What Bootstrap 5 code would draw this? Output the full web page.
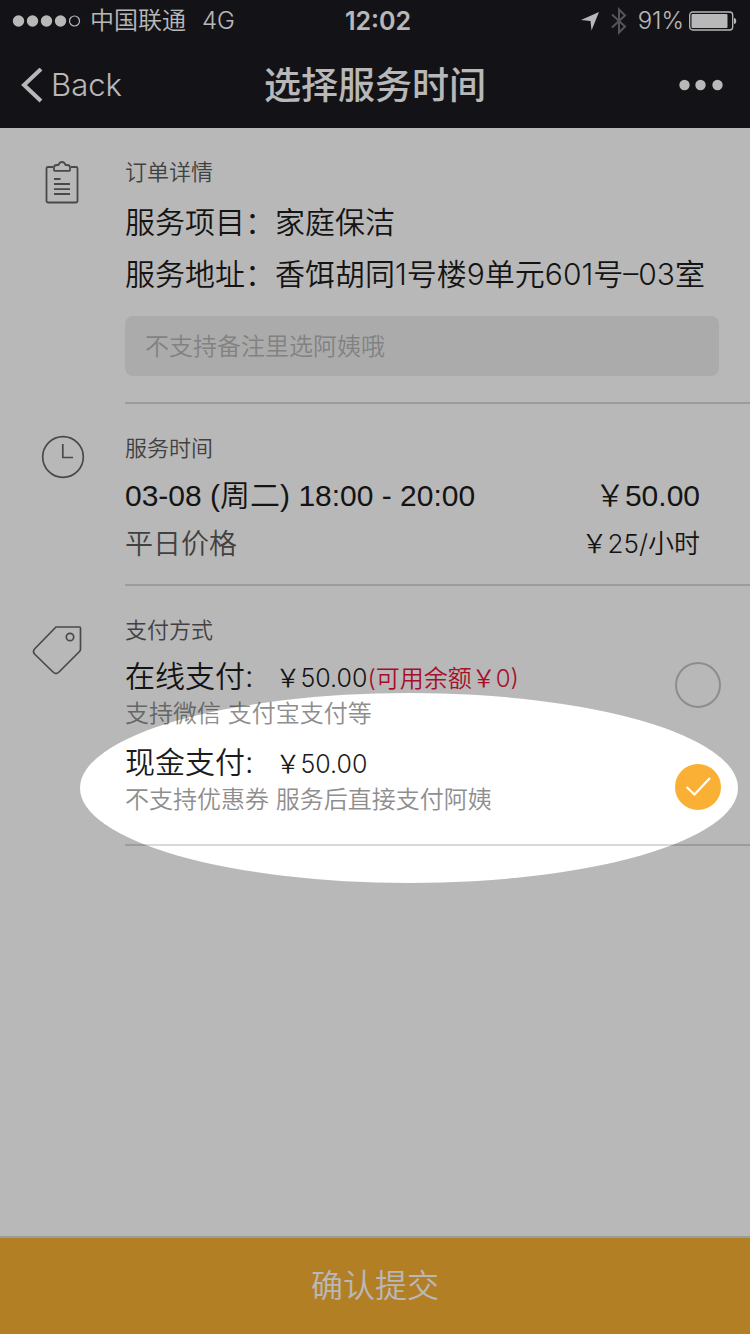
<!DOCTYPE html>
<html lang="zh-CN">
<head>
<meta charset="utf-8">
<meta name="viewport" content="width=device-width, initial-scale=1">
<title>选择服务时间</title>
<link href="https://cdn.jsdelivr.net/npm/bootstrap@5.3.0/dist/css/bootstrap.min.css" rel="stylesheet">
<style>
  body { font-family: Inter, "Noto Sans CJK SC", sans-serif; font-weight: 350; color: #1c1c1c; background: #fff; }
  .helv { font-family: "Liberation Sans", "Noto Sans CJK SC", sans-serif; }
  .topbar { background: #1b1a20; color: #fff; }
  .status { height: 40px; font-size: 24px; line-height: 40px; padding: 2px 12px 0; }
  .status-side { flex: 1 1 0; }
  .clock-text { font-size: 25px; font-weight: 600; padding-left: 6px; }
  .titlebar { height: 88px; padding: 4px 26px 0 20px; }
  .back { font-size: 31px; font-weight: 300; color: #fff; gap: 7px; text-decoration: none; }
  .page-title { font-size: 37px; font-weight: 500; line-height: 48px; margin: 0; padding-left: 6px; }
  .icon-col { width: 125px; flex: none; }
  .block-body { border-bottom: 2px solid #d9d9d9; padding-top: 28px; }
  .block-head { font-size: 22px; line-height: 32px; font-weight: 350; color: #5a5a5a; margin: 0 0 8px; }
  .line-lg { font-size: 30px; line-height: 52px; }
  .line-md { font-size: 30px; line-height: 48px; padding-right: 50px; }
  .plain-label { font-size: 28px; color: #5a5a5a; }
  .hour-price { font-size: 26px; }
  .note-wrap { padding: 16px 31px 26px 0; }
  .note { height: 60px; font: inherit; font-size: 24px; background: #eee; border: 0; border-radius: 8px; padding: 0 20px; }
  .note::placeholder { color: #b4b4b4; opacity: 1; }
  .pay-list { gap: 10px; padding-bottom: 28px; }
  .pay-name { font-size: 30px; line-height: 44px; height: 44px; }
  .pay-price { font-size: 25px; line-height: 32px; margin-left: 22px; }
  .pay-extra { font-size: 24px; line-height: 32px; color: #e8143a; }
  .pay-desc { font-size: 24px; line-height: 32px; color: #8e8e8e; }
  .pay-radio.form-check-input { width: 46px; height: 46px; margin: 0 29px 0 0; border: 2px solid #c4c4c4; flex: none; }
  .pay-radio.form-check-input:checked { border-color: #f9b034; background-color: #f9b034; background-size: 46px 46px;
    background-image: url("data:image/svg+xml,%3Csvg xmlns='http://www.w3.org/2000/svg' viewBox='0 0 46 46'%3E%3Cpath d='M11.500 23l8 7.500L35 14' fill='none' stroke='%23fff' stroke-width='2.200'/%3E%3C/svg%3E"); background-position: center; }
  .spotlight { left: 80px; right: 12px; top: 107px; height: 190px; border-radius: 50%; box-shadow: 0 0 0 2000px rgba(0,0,0,.28); pointer-events: none; }
  .submit { height: 98px; font-size: 32px; font-weight: 350; color: #fff; background: #f9b034; border: 0; border-top: 2px solid #d9d9d9; }
</style>
</head>
<body>
<div class="d-flex flex-column min-vh-100 overflow-hidden">
  <header class="topbar">
    <div class="status d-flex align-items-center">
      <div class="status-side d-flex align-items-center">
        <svg width="70" height="14" viewBox="0 0 70 14" fill="#fff" aria-hidden="true"><circle cx="6.500" cy="7" r="5.700"/><circle cx="20.500" cy="7" r="5.700"/><circle cx="34.500" cy="7" r="5.700"/><circle cx="48.500" cy="7" r="5.700"/><circle cx="62.500" cy="7" r="5" fill="none" stroke="#fff" stroke-width="1.200"/></svg>
        <span class="ms-2">中国联通</span><span class="ms-3">4G</span>
      </div>
      <div class="clock-text">12:02</div>
      <div class="status-side d-flex align-items-center justify-content-end">
        <svg width="20" height="20" viewBox="0 0 20 20" aria-hidden="true"><path d="M19 1L11.500 19.500 10.500 10 1 9z" fill="#fff"/></svg>
        <svg class="ms-2" width="22" height="28" viewBox="0 0 22 28" fill="none" stroke="#77767b" stroke-width="2" aria-hidden="true"><path d="M4 7.500L17 19.500 11 25.500V2.500L17 8.500 4 20.500"/></svg>
        <span class="ms-2">91%</span>
        <svg class="ms-1" width="50" height="20" viewBox="0 0 50 20" aria-hidden="true"><rect x="1.700" y="1" width="43" height="18" rx="3" fill="none" stroke="#fff" stroke-width="1.300"/><rect x="3.500" y="3" width="36" height="14" rx="1" fill="#fff"/><path d="M46 7c3 0 3 6 0 6z" fill="#fff"/></svg>
      </div>
    </div>
    <nav class="titlebar d-flex align-items-center" aria-label="导航">
      <div class="status-side"><a class="back d-inline-flex align-items-center" href="#"><svg width="24" height="36" viewBox="0 0 24 36" fill="none" stroke="#fff" stroke-width="4" aria-hidden="true"><path d="M21 1L4 17l17 16"/></svg>Back</a></div>
      <h1 class="page-title">选择服务时间</h1>
      <div class="status-side d-flex justify-content-end"><button class="btn d-flex p-0 border-0" type="button" aria-label="更多"><svg width="46" height="14" viewBox="0 0 46 14" fill="#fff"><circle cx="6.500" cy="6" r="5.200"/><circle cx="22.500" cy="6" r="5.200"/><circle cx="39.500" cy="6" r="5.200"/></svg></button></div>
    </nav>
  </header>

  <main class="flex-grow-1">
    <section class="d-flex">
      <div class="icon-col">
        <svg width="125" height="84" viewBox="0 0 125 84" fill="none" stroke="#666" stroke-width="1.800" stroke-linejoin="round" aria-hidden="true"><path d="M53 39H48q-1.500 0-1.500 1.500V73q0 1.500 1.500 1.500H76q1.500 0 1.500-1.500V40.500Q77.500 39 76 39H71M54 42V39.500Q54 37 57 37h1.500q1-3 3.500-3t3.500 3H67q3 0 3 2.500V42q0 .8-.8.8H54.800Q54 42.800 54 42zM54 51h6.500M54 56h16M54 61.200h16M54 66h16"/></svg>
      </div>
      <div class="block-body flex-grow-1">
        <h2 class="block-head">订单详情</h2>
        <div class="line-lg">服务项目：家庭保洁</div>
        <div class="line-lg text-nowrap">服务地址：香饵胡同1号楼9单元601号–03室</div>
        <div class="note-wrap"><input class="note w-100 d-block" type="text" placeholder="不支持备注里选阿姨哦" aria-label="备注"></div>
      </div>
    </section>

    <section class="d-flex">
      <div class="icon-col">
        <svg width="125" height="84" viewBox="0 0 125 84" fill="none" stroke="#666" stroke-width="1.700" aria-hidden="true"><circle cx="63" cy="53" r="20.300"/><path d="M62.800 40v13.500H73"/></svg>
      </div>
      <div class="block-body flex-grow-1 pb-3">
        <h2 class="block-head">服务时间</h2>
        <div class="line-md helv d-flex justify-content-between"><span>03-08 (周二) 18:00 - 20:00</span><span>￥50.00</span></div>
        <div class="line-md d-flex justify-content-between"><span class="plain-label">平日价格</span><span class="hour-price">￥25/小时</span></div>
      </div>
    </section>

    <section class="d-flex position-relative">
      <div class="icon-col">
        <svg width="125" height="94" viewBox="0 0 125 94" fill="none" stroke="#666" stroke-width="1.700" stroke-linejoin="round" aria-hidden="true"><path d="M56.500 41H79.500q1 0 1 1V63q0 1.500-1 2.500L59 86q-3 3-6 0L35 68.500q-3-3 0-6L55 42q.7-1 1.500-1z"/><circle cx="70" cy="51" r="3.700"/></svg>
      </div>
      <div class="block-body flex-grow-1">
        <h2 class="block-head">支付方式</h2>
        <div class="pay-list d-flex flex-column">
          <div class="d-flex align-items-start">
            <label class="flex-grow-1" for="payOnline">
              <span class="pay-name d-flex align-items-baseline">在线支付:<span class="pay-price">￥50.00</span><span class="pay-extra">(可用余额￥0)</span></span>
              <span class="pay-desc d-block">支持微信 支付宝支付等</span>
            </label>
            <input class="form-check-input pay-radio mt-2" type="radio" name="pay" id="payOnline">
          </div>
          <div class="d-flex align-items-start">
            <label class="flex-grow-1" for="payCash">
              <span class="pay-name d-flex align-items-baseline">现金支付:<span class="pay-price">￥50.00</span></span>
              <span class="pay-desc d-block">不支持优惠券 服务后直接支付阿姨</span>
            </label>
            <input class="form-check-input pay-radio mt-4" type="radio" name="pay" id="payCash" checked>
          </div>
        </div>
      </div>
      <div class="spotlight position-absolute"></div>
    </section>
  </main>

  <button class="submit w-100" type="submit">确认提交</button>
</div>
<script src="https://cdn.jsdelivr.net/npm/bootstrap@5.3.0/dist/js/bootstrap.bundle.min.js"></script>
</body>
</html>
